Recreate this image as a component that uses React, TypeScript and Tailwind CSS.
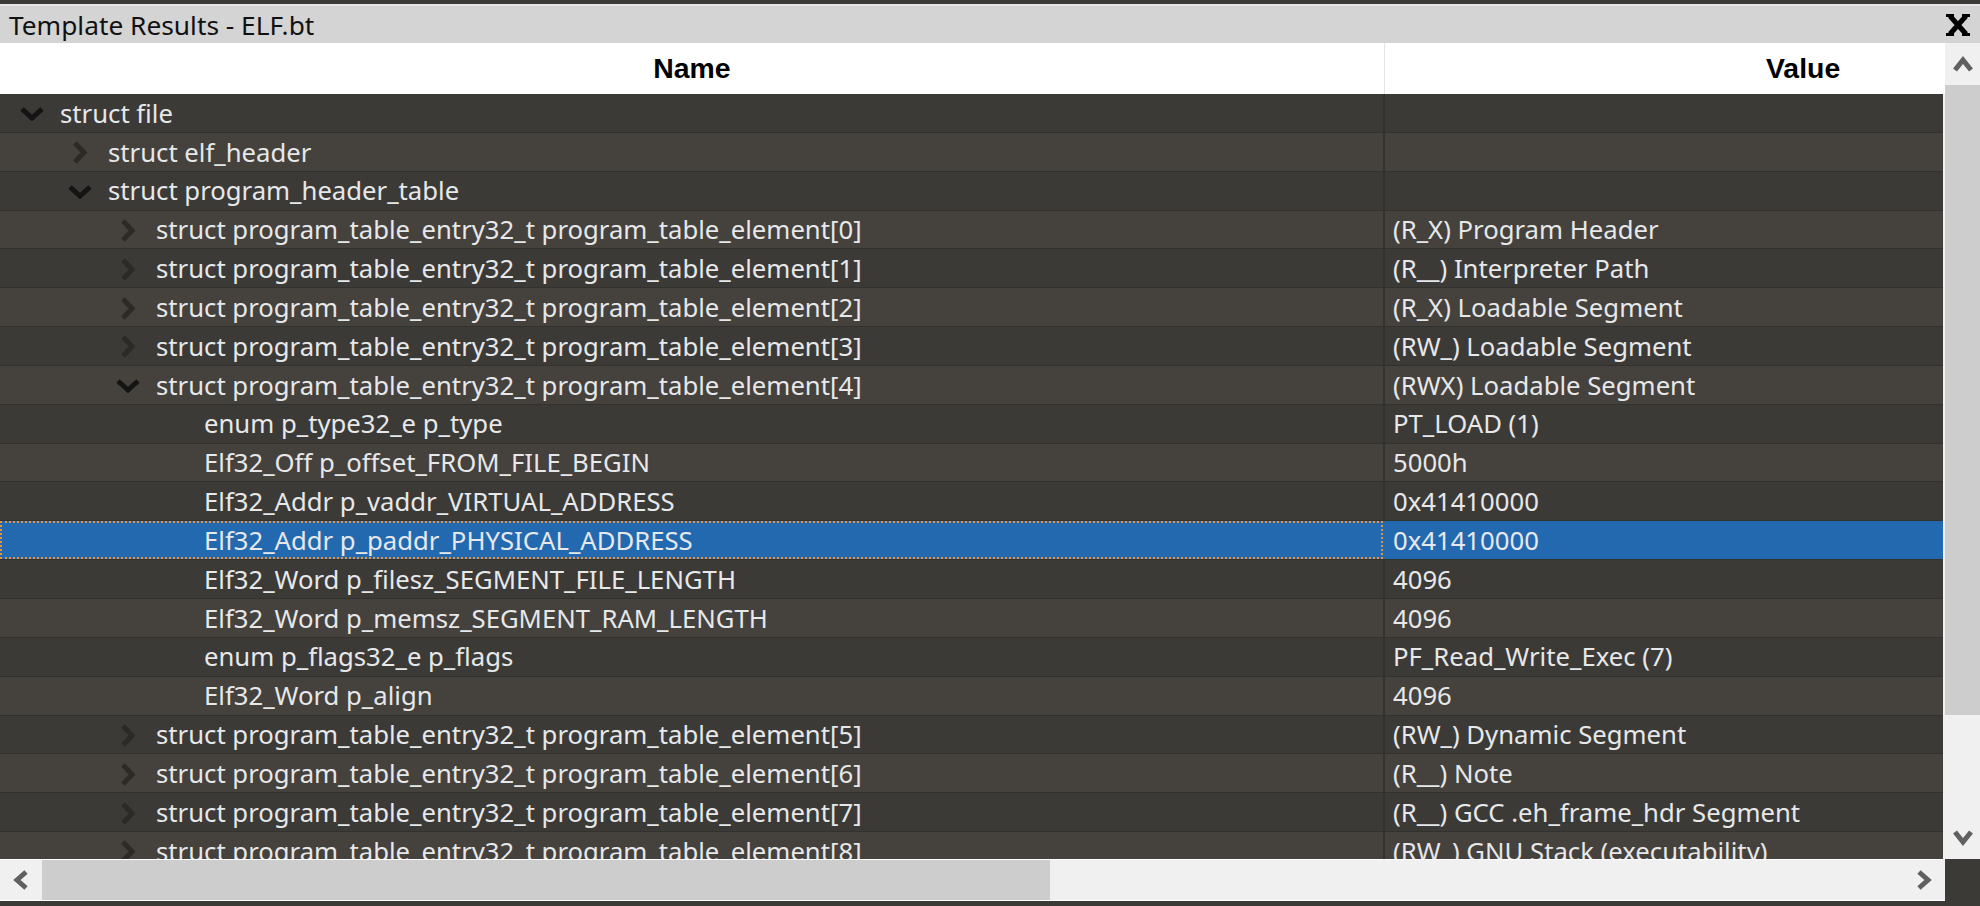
import React from "react";

type Row = {
  level: number;
  exp: "open" | "closed" | "none";
  name: string;
  value: string;
  selected?: boolean;
};

const rows: Row[] = [
  { level: 0, exp: "open", name: "struct file", value: "" },
  { level: 1, exp: "closed", name: "struct elf_header", value: "" },
  { level: 1, exp: "open", name: "struct program_header_table", value: "" },
  { level: 2, exp: "closed", name: "struct program_table_entry32_t program_table_element[0]", value: "(R_X) Program Header" },
  { level: 2, exp: "closed", name: "struct program_table_entry32_t program_table_element[1]", value: "(R__) Interpreter Path" },
  { level: 2, exp: "closed", name: "struct program_table_entry32_t program_table_element[2]", value: "(R_X) Loadable Segment" },
  { level: 2, exp: "closed", name: "struct program_table_entry32_t program_table_element[3]", value: "(RW_) Loadable Segment" },
  { level: 2, exp: "open", name: "struct program_table_entry32_t program_table_element[4]", value: "(RWX) Loadable Segment" },
  { level: 3, exp: "none", name: "enum p_type32_e p_type", value: "PT_LOAD (1)" },
  { level: 3, exp: "none", name: "Elf32_Off p_offset_FROM_FILE_BEGIN", value: "5000h" },
  { level: 3, exp: "none", name: "Elf32_Addr p_vaddr_VIRTUAL_ADDRESS", value: "0x41410000" },
  { level: 3, exp: "none", name: "Elf32_Addr p_paddr_PHYSICAL_ADDRESS", value: "0x41410000", selected: true },
  { level: 3, exp: "none", name: "Elf32_Word p_filesz_SEGMENT_FILE_LENGTH", value: "4096" },
  { level: 3, exp: "none", name: "Elf32_Word p_memsz_SEGMENT_RAM_LENGTH", value: "4096" },
  { level: 3, exp: "none", name: "enum p_flags32_e p_flags", value: "PF_Read_Write_Exec (7)" },
  { level: 3, exp: "none", name: "Elf32_Word p_align", value: "4096" },
  { level: 2, exp: "closed", name: "struct program_table_entry32_t program_table_element[5]", value: "(RW_) Dynamic Segment" },
  { level: 2, exp: "closed", name: "struct program_table_entry32_t program_table_element[6]", value: "(R__) Note" },
  { level: 2, exp: "closed", name: "struct program_table_entry32_t program_table_element[7]", value: "(R__) GCC .eh_frame_hdr Segment" },
  { level: 2, exp: "closed", name: "struct program_table_entry32_t program_table_element[8]", value: "(RW_) GNU Stack (executability)" },
];

const indentClass = ["w-0", "w-[48px]", "w-[96px]", "w-[144px]"];

function Chevron({ exp }: { exp: Row["exp"] }) {
  if (exp === "open") {
    return (
      <svg width="26" height="15" viewBox="0 0 26 15">
        <polyline points="3,3 13,12 23,3" fill="none" stroke="#141414" strokeWidth="5" strokeLinejoin="miter" />
      </svg>
    );
  }
  if (exp === "closed") {
    return (
      <svg width="16" height="23" viewBox="0 0 16 23">
        <polyline points="3,2 12,11.5 3,21" fill="none" stroke="#2c2a27" strokeWidth="5" strokeLinejoin="miter" />
      </svg>
    );
  }
  return null;
}

function TreeRow({ row, index }: { row: Row; index: number }) {
  const odd = index % 2 === 1;
  const bg = row.selected ? "bg-[#2369b0]" : odd ? "bg-[#45413c]" : "bg-[#3c3a36]";
  return (
    <div className={`flex h-[38.85px] shrink-0 border-b border-[#33312d] ${bg}`}>
      <div className="relative flex w-[1383px] shrink-0 items-center pl-[8px] pt-[2px]">
        {row.selected && (
          <div className="pointer-events-none absolute inset-0 border-2 border-dotted border-[#e8933a]" />
        )}
        <div className={`shrink-0 ${indentClass[row.level]}`} />
        <div className="flex w-[48px] shrink-0 items-center justify-center">
          <Chevron exp={row.exp} />
        </div>
        <span className="ml-[4px] whitespace-nowrap text-[#e6e8ea]">{row.name}</span>
      </div>
      <div className={`w-[2px] shrink-0 ${row.selected ? "bg-[#2369b0]" : "bg-[#34322e]"}`} />
      <div className="flex min-w-0 flex-1 items-center pl-[8px] pt-[2px]">
        <span className="whitespace-nowrap text-[#e6e8ea]">{row.value}</span>
      </div>
    </div>
  );
}

export default function App() {
  return (
    <div
      className="flex h-[906px] w-[1980px] flex-col overflow-hidden bg-[#3c3a36]"
      style={{ fontFamily: '"Noto Sans", "Open Sans", sans-serif' }}
    >
      <div className="h-[4px] shrink-0 bg-[#3c3a36]" />
      <div className="h-[2px] shrink-0 bg-[#e6e6e6]" />
      {/* title bar */}
      <div className="flex h-[37px] shrink-0 items-center justify-between bg-[#d4d4d4] pl-[9px] pr-[9px]">
        <span className="pt-[2px] text-[26.3px] leading-none text-[#111]">Template Results - ELF.bt</span>
        <svg width="26" height="24" viewBox="0 0 26 24">
          <path d="M5 3 L21 21 M21 3 L5 21" stroke="#000" strokeWidth="5" fill="none" />
          <rect x="1" y="1" width="8" height="3" fill="#000" />
          <rect x="17" y="1" width="8" height="3" fill="#000" />
          <rect x="1" y="20" width="8" height="3" fill="#000" />
          <rect x="17" y="20" width="8" height="3" fill="#000" />
        </svg>
      </div>

      {/* main */}
      <div className="flex h-[816px] shrink-0">
        <div className="flex w-[1945px] shrink-0 flex-col overflow-hidden">
          {/* header */}
          <div className="flex h-[51px] shrink-0 bg-white" style={{ fontFamily: '"Liberation Sans", Arial, sans-serif' }}>
            <div className="flex w-[1385px] shrink-0 items-center justify-center border-r border-[#e5e5e5]">
              <span className="text-[28.4px] font-bold text-black">Name</span>
            </div>
            <div className="flex flex-1 items-center pl-[381px]">
              <span className="text-[28.4px] font-bold text-black">Value</span>
            </div>
          </div>
          {/* rows */}
          <div className="flex flex-1 flex-col overflow-hidden border-r-2 border-[#f0f0f0] text-[25.7px]">
            {rows.map((r, i) => (
              <TreeRow key={i} row={r} index={i} />
            ))}
          </div>
        </div>
        {/* vertical scrollbar */}
        <div className="flex w-[35px] shrink-0 flex-col bg-[#f0f0f0]">
          <div className="flex h-[42px] shrink-0 items-center justify-center">
            <svg width="20" height="18" viewBox="0 0 20 18">
              <polyline points="2,15 10,5 18,15" fill="none" stroke="#606060" strokeWidth="5" />
            </svg>
          </div>
          <div className="h-[630px] shrink-0 bg-[#cdcdcd]" />
          <div className="flex flex-1 items-end justify-center pb-[12px]">
            <svg width="20" height="18" viewBox="0 0 20 18">
              <polyline points="2,3 10,13 18,3" fill="none" stroke="#606060" strokeWidth="5" />
            </svg>
          </div>
        </div>
      </div>

      {/* horizontal scrollbar */}
      <div className="flex h-[42px] shrink-0">
        <div className="flex w-[1945px] shrink-0 border-y border-[#ffffff] bg-[#f0f0f0]">
          <div className="flex w-[42px] shrink-0 items-center justify-center">
            <svg width="18" height="20" viewBox="0 0 18 20">
              <polyline points="14,2 5,10 14,18" fill="none" stroke="#606060" strokeWidth="5" />
            </svg>
          </div>
          <div className="w-[1008px] shrink-0 bg-[#cdcdcd]" />
          <div className="flex flex-1 items-center justify-end pr-[12px]">
            <svg width="18" height="20" viewBox="0 0 18 20">
              <polyline points="4,2 13,10 4,18" fill="none" stroke="#606060" strokeWidth="5" />
            </svg>
          </div>
        </div>
        <div className="flex-1 bg-[#3c3a36]" />
      </div>
      <div className="flex-1 bg-[#3c3a36]" />
    </div>
  );
}
